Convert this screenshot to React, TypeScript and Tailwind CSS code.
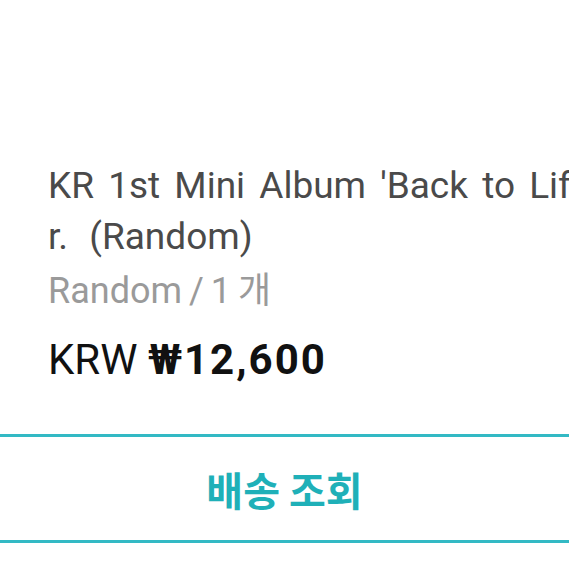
export default function App() {
  const font = { fontFamily: 'Roboto, "Noto Sans CJK KR", sans-serif' };
  return (
    <div className="w-[569px] h-[569px] overflow-hidden bg-white" style={font}>
      <div className="pt-[160px] pl-12">
        <div className="text-[37px] leading-[51px] text-[#4a4a4a] whitespace-nowrap">
          <p className="[word-spacing:5px]">KR 1st Mini Album 'Back to Life' Ve</p>
          <p className="[word-spacing:12px]">r. (Random)</p>
        </div>
        <p className="mt-[4px] text-[36px] leading-[51px] text-[#9a9a9a] [word-spacing:-2px]">Random / 1 개</p>
        <p className="mt-[16px] text-[42px] leading-[54px] text-[#111] whitespace-nowrap">
          KRW <span className="font-bold tracking-[2px]">₩12,600</span>
        </p>
      </div>
      <button className="mt-[47px] w-full h-[109px] border-y-[3px] border-[#33b9c4] flex items-center justify-center">
        <span
          className="text-[40px] font-bold text-[#1fb0b8]"
          style={{ fontFamily: '"Noto Sans CJK KR", sans-serif' }}
        >
          배송 조회
        </span>
      </button>
    </div>
  );
}
